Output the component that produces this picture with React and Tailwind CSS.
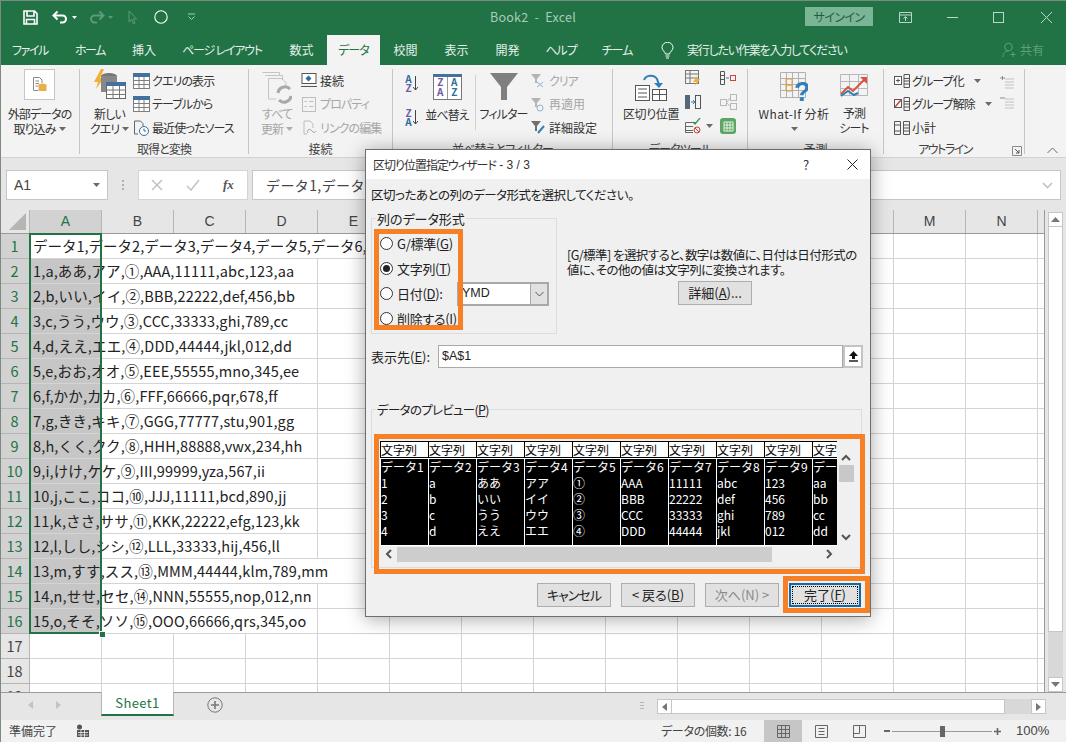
import React from 'react';

const UI = "font-['Noto_Sans_CJK_JP',sans-serif] [font-feature-settings:'palt']";

const TABS = [
  ['ファイル', 'w-[60px] tracking-[-1.4px]'],
  ['ホーム', 'w-[60px] tracking-[-1.4px]'],
  ['挿入', 'w-[48px]'],
  ['ページ レイアウト', 'w-[108px] tracking-[-1.2px] whitespace-pre'],
  ['数式', 'w-[51px]'],
  ['データ', 'w-[53px] bg-[#f3f3f3] text-[#217346] tracking-[-1px]'],
  ['校閲', 'w-[51px]'],
  ['表示', 'w-[51px]'],
  ['開発', 'w-[51px]'],
  ['ヘルプ', 'w-[56px] tracking-[-1px]'],
  ['チーム', 'w-[56px] tracking-[-1px]'],
];

const COLS = ['A', 'B', 'C', 'D', 'E', 'F', 'G', 'H', 'I', 'J', 'K', 'L', 'M', 'N'];

const ROWS = [
  'データ1,データ2,データ3,データ4,データ5,データ6,データ7,データ8,データ9,データ10',
  '1,a,ああ,アア,①,AAA,11111,abc,123,aa',
  '2,b,いい,イイ,②,BBB,22222,def,456,bb',
  '3,c,うう,ウウ,③,CCC,33333,ghi,789,cc',
  '4,d,ええ,エエ,④,DDD,44444,jkl,012,dd',
  '5,e,おお,オオ,⑤,EEE,55555,mno,345,ee',
  '6,f,かか,カカ,⑥,FFF,66666,pqr,678,ff',
  '7,g,きき,キキ,⑦,GGG,77777,stu,901,gg',
  '8,h,くく,クク,⑧,HHH,88888,vwx,234,hh',
  '9,i,けけ,ケケ,⑨,III,99999,yza,567,ii',
  '10,j,ここ,ココ,⑩,JJJ,11111,bcd,890,jj',
  '11,k,ささ,ササ,⑪,KKK,22222,efg,123,kk',
  '12,l,しし,シシ,⑫,LLL,33333,hij,456,ll',
  '13,m,すす,スス,⑬,MMM,44444,klm,789,mm',
  '14,n,せせ,セセ,⑭,NNN,55555,nop,012,nn',
  '15,o,そそ,ソソ,⑮,OOO,66666,qrs,345,oo',
];

const PREVIEW = [
  ['データ1', 'データ2', 'データ3', 'データ4', 'データ5', 'データ6', 'データ7', 'データ8', 'データ9', 'データ10'],
  ['1', 'a', 'ああ', 'アア', '①', 'AAA', '11111', 'abc', '123', 'aa'],
  ['2', 'b', 'いい', 'イイ', '②', 'BBB', '22222', 'def', '456', 'bb'],
  ['3', 'c', 'うう', 'ウウ', '③', 'CCC', '33333', 'ghi', '789', 'cc'],
  ['4', 'd', 'ええ', 'エエ', '④', 'DDD', '44444', 'jkl', '012', 'dd'],
];

// Small ribbon glyphs, all drawn on a 16px box
const Ico = ({ children, w = 16, h = 16, className = '' }) => (
  <svg width={w} height={h} viewBox={`0 0 ${w} ${h}`} fill="none" className={`shrink-0 ${className}`}>
    {children}
  </svg>
);

const TableIco = ({ head = '#41719c', line = '#7f7f7f' }) => (
  <Ico w={17} h={16}>
    <rect x="0.5" y="0.5" width="16" height="15" fill="#fff" stroke={line} />
    <rect x="0" y="0" width="17" height="4" fill={head} />
    <path d="M0 7.5H17M0 11.5H17M6 4V16M11 4V16" stroke={line} />
  </Ico>
);

const GroupIco = ({ mark }) => (
  <Ico>
    <rect x="0.5" y="3.5" width="7" height="8" fill="#fff" stroke="#555" />
    {mark}
    <path d="M10 1.5H15.5V14.5H10ZM10 5.5H15.5M10 8H15.5M10 11H15.5" stroke="#555" />
  </Ico>
);

const Caret = ({ className = '' }) => (
  <svg width="7" height="4" viewBox="0 0 7 4" className={`shrink-0 ${className}`}>
    <path d="M0 0H7L3.5 4Z" fill="#6a6a6a" />
  </svg>
);

const RibbonGroup = ({ width, label, labelClass = '', children }) => (
  <div className={`${width} h-[85px] border-r border-[#c6c6c6] flex flex-col shrink-0`}>
    <div className="h-[75px] flex shrink-0">{children}</div>
    <div className={`h-[10px] shrink-0 flex items-center justify-center text-[12px] leading-none text-[#444] tracking-[-0.9px] whitespace-nowrap ${labelClass}`}>{label}</div>
  </div>
);

const SmallBtn = ({ icon, children, grey, gap = 'gap-[2px]', kanji }) => (
  <div className={`h-[23.5px] flex items-center ${gap} text-[12px] whitespace-nowrap ${kanji ? '' : 'tracking-[-0.9px]'} ${grey ? 'text-[#a6a6a6]' : 'text-[#333]'}`}>
    {icon}
    <span>{children}</span>
  </div>
);

const BigLabel = ({ lines, grey, className = 'tracking-[-0.9px]' }) => (
  <div className={`text-[12px] leading-[15px] text-center whitespace-nowrap ${className} ${grey ? 'text-[#a6a6a6]' : 'text-[#333]'}`}>
    {lines.map((l, i) => (
      <div key={i} className="flex items-center justify-center gap-[3px]">{l}</div>
    ))}
  </div>
);

const Radio = ({ on, children, extra, labelClass = '' }) => (
  <div className="h-[25px] flex items-center gap-[4px] whitespace-nowrap text-[13px] tracking-[-0.3px]">
    <span className="w-[13px] h-[13px] rounded-full border border-[#333] bg-white flex items-center justify-center shrink-0">
      {on && <span className="w-[7px] h-[7px] rounded-full bg-[#222]" />}
    </span>
    <span className={labelClass}>{children}</span>
    {extra}
  </div>
);

const DlgBtn = ({ children, className = '' }) => (
  <div className={`h-[24px] border border-[#adadad] bg-[#e1e1e1] flex items-center justify-center text-[13px] whitespace-nowrap ${className}`}>
    {children}
  </div>
);

const Chevron = ({ dir }) => {
  const paths = {
    up: 'M1 6L5 2L9 6',
    down: 'M1 2L5 6L9 2',
    left: 'M6 1L2 5L6 9',
    right: 'M2 1L6 5L2 9',
  };
  const box = dir === 'up' || dir === 'down' ? '0 0 10 8' : '0 0 8 10';
  const size = dir === 'up' || dir === 'down' ? { width: 10, height: 8 } : { width: 8, height: 10 };
  return (
    <svg {...size} viewBox={box} fill="none" className="shrink-0">
      <path d={paths[dir]} stroke="#555" strokeWidth="2" />
    </svg>
  );
};

const TitleBar = () => (
  <div className="h-[33px] bg-[#217346] flex items-center shrink-0 border-t border-[#7c8a82] relative">
    <div className="flex items-center pl-[23px]">
      <Ico w={15} h={15}>
        <path d="M1 1H11.5L14 3.5V14H1Z M4 1.5V6H11V1.5 M3.5 14V9.5H11.5V14" stroke="#fff" strokeWidth="1.6" />
      </Ico>
      <Ico w={17} h={14} className="ml-[14px]">
        <path d="M1.5 5.5H10.5A3.5 3.5 0 0 1 10.5 12.5H8M5.5 1.5L1.5 5.5L5.5 9.5" stroke="#fff" strokeWidth="2" />
      </Ico>
      <svg width="5" height="3" viewBox="0 0 5 3" className="ml-[3px]"><path d="M0 0H5L2.5 3Z" fill="#fff" /></svg>
      <Ico w={17} h={14} className="ml-[11px]">
        <path d="M15.5 5.5H6.5A3.5 3.5 0 0 0 6.5 12.5H9M11.5 1.5L15.5 5.5L11.5 9.5" stroke="#5c9a78" strokeWidth="2" />
      </Ico>
      <svg width="5" height="3" viewBox="0 0 5 3" className="ml-[3px]"><path d="M0 0H5L2.5 3Z" fill="#5c9a78" /></svg>
      <Ico w={9} h={15} className="ml-[15px]">
        <path d="M1 1V12L3.5 9.5L5.5 14L7 13L5 9H8.5Z" stroke="#5c9a78" />
      </Ico>
      <Ico w={14} h={14} className="ml-[17px]">
        <circle cx="7" cy="7" r="6.2" stroke="#fff" strokeWidth="1.1" />
      </Ico>
      <Ico w={9} h={8} className="ml-[19px]">
        <path d="M1 1H8M1.5 3.5L4.5 6.5L7.5 3.5" stroke="#a9cbb8" />
      </Ico>
    </div>
    <div className="absolute left-[490px] top-[8px] text-[12.5px] leading-[16px] text-[#a9cbb8] whitespace-pre tracking-[0.25px]">Book2  -  Excel</div>
    <div className="ml-auto flex items-center">
      <div className="w-[68px] h-[19px] bg-[#7ab595] text-[#1f5f3c] text-[12px] tracking-[-0.6px] flex items-center justify-center mb-[1px]">サインイン</div>
      <div className="w-[74px] flex items-center">
        <Ico w={13} h={11} className="ml-[26px]">
          <path d="M0.5 0.5H12.5V10.5H0.5ZM0.5 3H12.5M6.5 9V5M4.5 6.5L6.5 4.5L8.5 6.5" stroke="#bcd6c8" />
        </Ico>
      </div>
      <div className="w-[46px] flex"><span className="w-[11px] h-[1px] bg-[#bcd6c8]" /></div>
      <div className="w-[47px] flex"><span className="w-[11px] h-[11px] border border-[#bcd6c8]" /></div>
      <Ico w={13} h={13} className="mr-[13px]"><path d="M1 1L12 12M12 1L1 12" stroke="#bcd6c8" /></Ico>
    </div>
  </div>
);

const TabBar = () => (
  <div className="h-[32px] bg-[#217346] flex items-end shrink-0 text-[12px] text-[#e6f0ea]">
    {TABS.map(([name, cls]) => (
      <div key={name} className={`h-[30px] flex items-center justify-center whitespace-nowrap ${cls}`}>{name}</div>
    ))}
    <div className="h-[30px] flex items-center ml-[16px] gap-[13px]">
      <Ico w={13} h={17}>
        <path d="M4.5 12C4 9.5 1 8.5 1 5.5A5.5 5.2 0 0 1 12 5.5C12 8.5 9 9.5 8.5 12ZM4.5 14H8.5M5 16H8" stroke="#fff" />
      </Ico>
      <span className="tracking-[-1.2px]">実行したい作業を入力してください</span>
    </div>
    <div className="h-[30px] flex items-center ml-auto mr-[22px] gap-[3px] text-[#5f9f7d]">
      <Ico w={15} h={16}>
        <circle cx="6.5" cy="5" r="3.8" stroke="#5f9f7d" />
        <path d="M1 15C1 11 3 9 6.5 9M11 10V15M8.5 12.5H13.5" stroke="#5f9f7d" />
      </Ico>
      <span>共有</span>
    </div>
  </div>
);

const Ribbon = () => (
  <div className="h-[93px] bg-[#f3f3f3] border-b border-[#d2d2d2] flex pt-[4px] shrink-0 relative">
    <RibbonGroup width="w-[80px]" label="">
      <div className="w-full flex flex-col items-center">
        <div className="w-[31px] h-[31px] bg-white border border-[#c6c6c6] flex items-center justify-center">
          <Ico w={14} h={15}>
            <path d="M0.5 0.5H6.5L9 3V6M0.5 0.5V13.5H5" stroke="#8a8a8a" fill="#fff" />
            <path d="M2.5 4H6M2.5 6.5H6M2.5 9H5" stroke="#8a8a8a" />
            <ellipse cx="9.5" cy="8" rx="4" ry="1.6" fill="#e8b04a" />
            <rect x="5.5" y="8" width="8" height="6" fill="#e8b04a" />
          </Ico>
        </div>
        <div className="mt-[6px]">
          <BigLabel lines={['外部データの', <React.Fragment key="a">取り込み <Caret /></React.Fragment>]} />
        </div>
      </div>
    </RibbonGroup>

    <RibbonGroup width="w-[169px]" label="取得と変換">
      <div className="w-[53px] flex flex-col items-center shrink-0 pl-[6px]">
        <Ico w={34} h={36}>
          <path d="M8 0L1 13H5L3 20L11 9H7L11 0Z" fill="#f2b035" />
          <ellipse cx="16" cy="7" rx="8" ry="3" fill="#777" />
          <rect x="8" y="7" width="16" height="16" fill="#888" />
          <rect x="13.5" y="13.5" width="19" height="16" fill="#fff" stroke="#666" />
          <rect x="13" y="13" width="20" height="4" fill="#41719c" />
          <path d="M13 21H33M13 25.5H33M20 17V30M26.5 17V30" stroke="#777" />
        </Ico>
        <div className="mt-[1px]">
          <BigLabel lines={['新しい', <React.Fragment key="a">クエリ <Caret /></React.Fragment>]} />
        </div>
      </div>
      <div className="flex flex-col">
        <SmallBtn icon={<TableIco head="#41719c" />}>クエリの表示</SmallBtn>
        <SmallBtn icon={<TableIco head="#41719c" />}>テーブルから</SmallBtn>
        <SmallBtn icon={
          <Ico w={17} h={16}>
            <path d="M1.5 1H7.5L10 3.5V6M1.5 1V14H5" stroke="#666" />
            <circle cx="11" cy="11" r="4.5" fill="#fff" stroke="#2f6f9f" />
            <path d="M11 8.5V11H13" stroke="#2f6f9f" />
          </Ico>
        }>最近使ったソース</SmallBtn>
      </div>
    </RibbonGroup>

    <RibbonGroup width="w-[144px]" label="接続" labelClass="tracking-normal">
      <div className="w-[52px] flex flex-col items-center shrink-0 pl-[4px] text-[#a6a6a6]">
        <Ico w={30} h={32} className="mt-[3px]">
          <path d="M0.5 0.5H17.5V4M3.5 3.5H20.5V8M6.5 6.5H20L24 11V16M6.5 6.5V27H14" stroke="#c4c4c4" />
          <path d="M16 21A7 7 0 0 1 28 17M29 24A7 7 0 0 1 17 28" stroke="#a8a8a8" strokeWidth="3" />
        </Ico>
        <div className="mt-[2px]">
          <BigLabel grey lines={['すべて', <React.Fragment key="a">更新 <Caret className="opacity-50" /></React.Fragment>]} />
        </div>
      </div>
      <div className="flex flex-col">
        <SmallBtn kanji gap="gap-[3px]" icon={
          <Ico w={16} h={15}>
            <rect x="1" y="0.5" width="14" height="10" fill="#fff" stroke="#555" />
            <path d="M7.5 2.5L10.5 5.5L7.5 8.5L4.5 5.5Z" fill="#2f6f9f" />
            <path d="M0 13.5H16" stroke="#555" />
          </Ico>
        }>接続</SmallBtn>
        <SmallBtn grey gap="gap-[3px]" icon={
          <Ico w={16} h={15}>
            <rect x="1.5" y="0.5" width="13" height="14" stroke="#bdbdbd" />
            <path d="M3.5 4.5H6M8 4.5H12.5M3.5 9.5H6M8 9.5H12.5" stroke="#bdbdbd" />
          </Ico>
        }>プロパティ</SmallBtn>
        <SmallBtn grey gap="gap-[3px]" icon={
          <Ico w={16} h={15}>
            <path d="M3 1H9L12 4V8M3 1V14H6" stroke="#bdbdbd" />
            <path d="M7 13A2 2 0 0 1 10 10L12 12A2 2 0 0 0 15 11" stroke="#a8a8a8" />
          </Ico>
        }>リンクの編集</SmallBtn>
      </div>
    </RibbonGroup>

    <RibbonGroup width="w-[220px]" label="並べ替えとフィルター">
      <div className="w-[32px] flex flex-col items-center pt-[5px] gap-[16px] shrink-0 pl-[6px]">
        <div className="flex items-center text-[10px] leading-[9px] font-bold text-[#6f5aa6]">
          <span className="flex flex-col text-center"><span className="text-[#2f6f9f]">A</span><span>Z</span></span>
          <Ico w={7} h={15}><path d="M3.5 0V14M1 11L3.5 14L6 11" stroke="#444" /></Ico>
        </div>
        <div className="flex items-center text-[10px] leading-[9px] font-bold text-[#6f5aa6]">
          <span className="flex flex-col text-center"><span>Z</span><span className="text-[#2f6f9f]">A</span></span>
          <Ico w={7} h={15}><path d="M3.5 0V14M1 11L3.5 14L6 11" stroke="#444" /></Ico>
        </div>
      </div>
      <div className="w-[44px] flex flex-col items-center shrink-0">
        <div className="w-[29px] h-[26px] mt-[5px] border border-[#777] bg-white border-t-[3px] border-t-[#41719c] grid grid-cols-2 text-[10px] leading-[10px] font-bold text-center text-[#6f5aa6]">
          <span>Z<br />A</span>
          <span className="border-l border-[#999] text-[#2f6f9f]">A<br />Z</span>
        </div>
        <div className="mt-[7px]"><BigLabel lines={['並べ替え']} /></div>
      </div>
      <div className="w-px h-[55px] bg-[#d0d0d0] mt-[6px] ml-[6px] shrink-0" />
      <div className="w-[55px] flex flex-col items-center shrink-0">
        <Ico w={28} h={28} className="mt-[4px]">
          <path d="M0 0H28L17 14V27H11V14Z" fill="#7f7f7f" />
        </Ico>
        <div className="mt-[5px]"><BigLabel lines={['フィルター']} /></div>
      </div>
      <div className="flex flex-col">
        <SmallBtn grey icon={<Ico w={16} h={15}><path d="M0 1H10L6 6V10H4V6Z" fill="#b5b5b5" /><path d="M6 9L12 14M12 9L6 14" stroke="#8fb2cc" /></Ico>}>クリア</SmallBtn>
        <SmallBtn grey kanji icon={<Ico w={16} h={15}><path d="M0 1H10L6 6V10H4V6Z" fill="#b5b5b5" /><circle cx="9" cy="11" r="3" stroke="#8fb2cc" /></Ico>}>再適用</SmallBtn>
        <SmallBtn kanji icon={<Ico w={16} h={15}><path d="M0 1H10L6 6V11H4V6Z" fill="#6f6f6f" /><path d="M7 13L13 6" stroke="#2f7fb8" strokeWidth="2" /></Ico>}>詳細設定</SmallBtn>
      </div>
    </RibbonGroup>

    <RibbonGroup width="w-[135px]" label="データツール">
      <div className="w-[67px] flex flex-col items-center shrink-0 pl-[9px]">
        <Ico w={32} h={28} className="mt-[5px]">
          <path d="M9 6A7 6 0 0 1 22 5L24 11" stroke="#2f7fb8" strokeWidth="2" />
          <path d="M19 9H28L24 14Z" fill="#2f7fb8" />
          <rect x="0.5" y="11.5" width="14" height="15" fill="#fff" stroke="#555" />
          <path d="M3 15H12M3 19H12M3 23H12" stroke="#555" />
          <rect x="17.5" y="15.5" width="14" height="11" fill="#fff" stroke="#555" />
          <path d="M17 20.5H32M24.5 15V27" stroke="#555" />
        </Ico>
        <div className="mt-[4px]"><BigLabel className="tracking-[-0.4px]" lines={['区切り位置']} /></div>
      </div>
      <div className="flex flex-col pl-[5px] pt-[1px] gap-[8px]">
        <Ico w={16} h={16}>
          <rect x="0.5" y="0.5" width="13" height="13" stroke="#777" />
          <path d="M1 4H13M1 8H13M5 1V13" stroke="#777" />
          <path d="M12 6L8 12H11L10 16L15 9H12Z" fill="#f2b035" />
        </Ico>
        <Ico w={16} h={16}>
          <rect x="0" y="1" width="5" height="14" fill="#56677a" />
          <rect x="10.5" y="1.5" width="5" height="13" stroke="#555" />
          <path d="M6 8H9.5M8 6L10 8L8 10" stroke="#2f7fb8" />
        </Ico>
        <div className="flex items-center gap-[5px]">
          <Ico w={16} h={16}>
            <path d="M0.5 4.5H12M0.5 8.5H8M0.5 12.5H8M0.5 4.5V14.5H8" stroke="#666" />
            <path d="M8 4L10 6L15 0" stroke="#3c9a5f" strokeWidth="1.4" />
            <circle cx="12" cy="12" r="3" stroke="#c8453b" />
            <path d="M10 10L14 14" stroke="#c8453b" />
          </Ico>
          <Caret />
        </div>
      </div>
      <div className="flex flex-col pl-[7px] pt-[1px] gap-[8px]">
        <Ico w={17} h={16}>
          <path d="M0.5 1.5H4.5V14.5H0.5ZM0.5 5.5H4.5M0.5 9.5H4.5" stroke="#555" />
          <path d="M6 8H9" stroke="#2f7fb8" />
          <rect x="10.5" y="5.5" width="5" height="5" stroke="#c8453b" />
        </Ico>
        <Ico w={17} h={16}>
          <rect x="0.5" y="5.5" width="6" height="6" stroke="#b8b8b8" />
          <rect x="10.5" y="0.5" width="6" height="6" stroke="#b8b8b8" />
          <rect x="10.5" y="9.5" width="6" height="6" stroke="#b8b8b8" />
          <path d="M7 8L10 4M7 9L10 12" stroke="#b8b8b8" />
        </Ico>
        <Ico w={16} h={16}>
          <rect x="0" y="0" width="16" height="16" rx="3" fill="#5fa565" />
          <path d="M4 4H13V13H4ZM4 7H13M4 10H13M7 4V13M10 4V13" stroke="#e7f3e8" />
        </Ico>
      </div>
    </RibbonGroup>

    <RibbonGroup width="w-[136px]" label="予測" labelClass="tracking-normal">
      <div className="w-[88px] flex flex-col items-center shrink-0 pl-[4px]">
        <Ico w={28} h={31} className="mt-[3px]">
          <path d="M0.5 0.5H25.5V25.5H0.5ZM0.5 6.5H25.5M0.5 12.5H25.5M0.5 18.5H25.5M6.5 0.5V25.5M12.5 0.5V25.5M18.5 0.5V25.5" stroke="#b0b0b0" />
          <path d="M6 7H12V13H6ZM6 13H12V19H6Z" stroke="#d9a24a" />
          <text x="14" y="29" fontSize="27" fontWeight="700" fill="#2f7fb8" fontFamily="Liberation Sans">?</text>
        </Ico>
        <div className="mt-[3px]"><BigLabel className="tracking-[0.4px]" lines={['What-If 分析', <Caret key="a" className="mt-[6px]" />]} /></div>
      </div>
      <div className="w-[36px] flex flex-col items-center shrink-0">
        <Ico w={28} h={28} className="mt-[5px]">
          <path d="M0.5 0.5H27.5V21.5H0.5ZM0.5 7.5H27.5M0.5 14.5H27.5M9.5 0.5V21.5M18.5 0.5V21.5" stroke="#b8b8b8" />
          <path d="M1 20L8 13L13 17L26 4" stroke="#d8543e" strokeWidth="2" />
          <path d="M1 22L8 17L14 21L18 19" stroke="#2f7fb8" strokeWidth="2" />
          <path d="M20 3H27V10Z" fill="#d8543e" />
        </Ico>
        <div className="mt-[3px]"><BigLabel lines={['予測', 'シート']} /></div>
      </div>
    </RibbonGroup>

    <RibbonGroup width="w-[141px]" label="アウトライン" labelClass="pr-[18px] tracking-[-1.5px]">
      <div className="flex flex-col pl-[10px]">
        <SmallBtn icon={<GroupIco mark={<path d="M2 7.5H6M4 5.5V9.5" stroke="#555" />} />}>
          <span className="inline-flex items-center gap-[10px]">グループ化<Caret /></span>
        </SmallBtn>
        <SmallBtn icon={<GroupIco mark={<path d="M1 11L7 4" stroke="#c8453b" strokeWidth="1.6" />} />}>
          <span className="inline-flex items-center gap-[10px]">グループ解除<Caret /></span>
        </SmallBtn>
        <SmallBtn kanji icon={
          <Ico>
            <path d="M0.5 1.5H6.5V14.5H0.5ZM9.5 1.5H15.5V14.5H9.5ZM9.5 5H15.5M9.5 8H15.5M9.5 11H15.5M0.5 5H6.5M0.5 11H6.5" stroke="#555" />
          </Ico>
        }>小計</SmallBtn>
      </div>
      <div className="flex flex-col pl-[8px] pt-[6px] gap-[6px]">
        <Ico w={14} h={14}><path d="M5 7H14M5 10H14M5 13H14M5 4H14" stroke="#c2c2c2" /><path d="M0 3H5M2.5 1V5" stroke="#8a8a8a" /></Ico>
        <Ico w={14} h={14}><path d="M5 7H14M5 10H14M5 13H14M5 4H14" stroke="#c2c2c2" /><path d="M0 3H5" stroke="#8a8a8a" /></Ico>
      </div>
    </RibbonGroup>

    <div className="absolute left-[1012px] top-[81px]">
      <Ico w={10} h={10}><path d="M0.5 0.5H9.5V9.5H0.5Z" stroke="#8a8a8a" /><path d="M3 3L7 7M7 4V7H4" stroke="#555" /></Ico>
    </div>
    <div className="absolute left-[1047px] top-[82px]">
      <Ico w={11} h={7}><path d="M0.5 6L5.5 1L10.5 6" stroke="#666" /></Ico>
    </div>
  </div>
);

const FormulaBar = () => (
  <div className="h-[52px] bg-[#e6e6e6] flex items-start pt-[12px] pl-[6px] pr-[5px] shrink-0 text-[14px]">
    <div className="w-[102px] h-[30px] bg-white border border-[#c6c6c6] flex items-center justify-between pl-[7px] pr-[7px] font-['Liberation_Sans',sans-serif] text-[#444]">
      <span>A1</span>
      <Caret />
    </div>
    <div className="w-[30px] h-[30px] flex flex-col items-center justify-center gap-[2px]">
      <span className="w-[2px] h-[2px] bg-[#b0b0b0]" />
      <span className="w-[2px] h-[2px] bg-[#b0b0b0]" />
      <span className="w-[2px] h-[2px] bg-[#b0b0b0]" />
    </div>
    <div className="w-[110px] h-[30px] bg-white border border-[#d4d4d4] flex items-center pl-[12px] gap-[23px]">
      <Ico w={12} h={12}><path d="M1 1L11 11M11 1L1 11" stroke="#c2c2c2" strokeWidth="1.5" /></Ico>
      <Ico w={14} h={12}><path d="M1 7L5 11L13 1" stroke="#c2c2c2" strokeWidth="1.5" /></Ico>
      <span className="font-['Liberation_Serif',serif] italic text-[13px] text-[#555] font-bold">fx</span>
    </div>
    <div className="flex-1 h-[30px] ml-[4px] bg-white border border-[#c6c6c6] flex items-center pl-[13px] pr-[7px] justify-between text-[#444] tracking-[0.4px] whitespace-nowrap [font-feature-settings:normal]">
      <span>データ1,データ2,データ3,データ4,データ5,データ6</span>
      <Ico w={11} h={7}><path d="M1 1L5.5 5.5L10 1" stroke="#c2c2c2" strokeWidth="1.6" /></Ico>
    </div>
  </div>
);

const SheetRow = ({ num, text }) => {
  const span = num === 1 ? 'col-span-6' : num === 14 ? 'col-span-5' : text ? 'col-span-4' : '';
  const used = num === 1 ? 6 : num === 14 ? 5 : text ? 4 : 1;
  return (
    <div className="grid grid-cols-[30px_repeat(14,72px)_7px] h-[25px] shrink-0">
      <div className={`border-b border-r border-[#b5b5b5] flex items-center justify-center text-[14.5px] ${text ? 'bg-[#d2d2d2] text-[#217346]' : 'bg-[#e6e6e6] text-[#444]'}`}>{num}</div>
      <div className={`${span} relative border-b border-r border-[#d4d4d4] flex items-center pl-[3px] whitespace-nowrap text-[14.5px] text-[#222] overflow-hidden`}>
        {text && num > 1 && <div className="absolute left-0 top-0 bottom-0 w-[70px] bg-[#c6c6c6]" />}
        <span className={`relative ${num > 1 ? 'tracking-[0.15px]' : ''}`}>{text}</span>
      </div>
      {Array.from({ length: 15 - used }, (_, i) => (
        <div key={i} className="border-b border-r border-[#d4d4d4]" />
      ))}
    </div>
  );
};

const Sheet = () => (
  <div className="flex flex-1 min-h-0 bg-[#e6e6e6] [font-feature-settings:normal]">
    <div className="w-[1045px] relative flex flex-col overflow-hidden bg-white border-r border-[#9a9a9a] shrink-0">
      <div className="grid grid-cols-[30px_repeat(14,72px)_7px] h-[24px] shrink-0 bg-[#e6e6e6] border-b border-[#9a9a9a]">
        <div className="border-r border-[#b5b5b5] flex items-end justify-end pr-[3px] pb-[3px]">
          <svg width="17" height="17" viewBox="0 0 17 17"><path d="M17 0V17H0Z" fill="#b5b5b5" /></svg>
        </div>
        {COLS.map((c, i) => (
          <div key={c} className={`border-r border-[#b5b5b5] flex items-center justify-center text-[14px] font-['Liberation_Sans',sans-serif] ${i === 0 ? 'bg-[#d2d2d2] text-[#217346]' : 'text-[#444]'}`}>{c}</div>
        ))}
        <div />
      </div>
      {ROWS.map((t, i) => <SheetRow key={i} num={i + 1} text={t} />)}
      <SheetRow num={17} />
      <SheetRow num={18} />
      <SheetRow num={19} />
      {/* selection frame over column A */}
      <div className="absolute left-[29px] top-[23px] w-[73px] h-[401px] border-2 border-[#217346] pointer-events-none" />
      <div className="absolute left-[99px] top-[421px] w-[5px] h-[5px] bg-[#217346] border border-white box-content" />
    </div>
    {/* vertical scrollbar */}
    <div className="w-[21px] pl-[3px] pr-[3px] pt-[2px] flex flex-col shrink-0">
      <div className="h-[15px] bg-white border border-[#c6c6c6] flex items-center justify-center">
        <svg width="9" height="5" viewBox="0 0 9 5"><path d="M4.5 0L9 5H0Z" fill="#777" /></svg>
      </div>
      <div className="h-[405px] bg-white border-x border-b border-[#c6c6c6]" />
      <div className="flex-1 bg-[#d8d8d8]" />
      <div className="h-[15px] bg-white border border-[#c6c6c6] flex items-center justify-center">
        <svg width="9" height="5" viewBox="0 0 9 5"><path d="M0 0H9L4.5 5Z" fill="#777" /></svg>
      </div>
    </div>
  </div>
);

const SheetTabs = () => (
  <div className="h-[28px] bg-[#e6e6e6] border-t border-[#9a9a9a] flex items-start shrink-0 relative">
    <div className="w-[101px] h-[24px] flex items-center pl-[28px] gap-[23px]">
      <svg width="5" height="8" viewBox="0 0 5 8"><path d="M5 0V8L0 4Z" fill="#c2c2c2" /></svg>
      <svg width="5" height="8" viewBox="0 0 5 8"><path d="M0 0V8L5 4Z" fill="#c2c2c2" /></svg>
    </div>
    <div className="w-[73px] h-[24px] -mt-px bg-white border-x border-b-2 border-x-[#b5b5b5] border-b-[#217346] text-[#217346] text-[13px] flex items-center justify-center tracking-[0.4px]">Sheet1</div>
    <div className="ml-[33px] mt-[4px]">
      <Ico><circle cx="8" cy="8" r="7.2" stroke="#777" /><path d="M4 8H12M8 4V12" stroke="#777" strokeWidth="1.6" /></Ico>
    </div>
    <div className="absolute left-[640px] top-[9px] flex flex-col gap-[2px]">
      <span className="w-[4px] h-[1px] bg-[#b5b5b5]" />
      <span className="w-[4px] h-[1px] bg-[#b5b5b5]" />
      <span className="w-[4px] h-[1px] bg-[#b5b5b5]" />
    </div>
    <div className="absolute left-[657px] top-[6px] w-[389px] h-[15px] flex bg-[#d8d8d8]">
      <div className="w-[15px] bg-white border border-[#c6c6c6] flex items-center justify-center">
        <svg width="5" height="8" viewBox="0 0 5 8"><path d="M5 0V8L0 4Z" fill="#777" /></svg>
      </div>
      <div className="w-[333px] bg-white border-y border-r border-[#c6c6c6]" />
      <div className="flex-1" />
      <div className="w-[15px] bg-white border border-[#c6c6c6] flex items-center justify-center">
        <svg width="5" height="8" viewBox="0 0 5 8"><path d="M0 0V8L5 4Z" fill="#777" /></svg>
      </div>
    </div>
  </div>
);

const StatusBar = () => (
  <div className="h-[22px] bg-[#f1f1f1] flex items-center shrink-0 text-[12px] text-[#444]">
    <span className="ml-[9px] [font-feature-settings:normal]">準備完了</span>
    <Ico w={14} h={14} className="ml-[19px]">
      <circle cx="3.5" cy="3" r="2.5" fill="#555" />
      <path d="M1 6H13V13H1Z" fill="#555" />
      <path d="M2 8.5H12M2 11H12M5 6V13M8.5 6V13" stroke="#f1f1f1" strokeWidth="0.8" />
    </Ico>
    <span className="ml-[571px] w-[85px] whitespace-nowrap tracking-[-0.3px]">データの個数: 16</span>
    <div className="ml-[18px] w-[38px] h-[22px] bg-[#c6c6c6] flex items-center justify-center">
      <Ico w={13} h={13}><path d="M0.5 0.5H12.5V12.5H0.5ZM0.5 4.5H12.5M0.5 8.5H12.5M4.5 0.5V12.5M8.5 0.5V12.5" stroke="#666" /></Ico>
    </div>
    <div className="w-[38px] flex justify-center">
      <Ico w={13} h={13}><path d="M0.5 0.5H12.5V12.5H0.5ZM3.5 3.5H9.5M3.5 6.5H9.5M3.5 9.5H9.5" stroke="#666" /></Ico>
    </div>
    <div className="w-[38px] flex justify-center">
      <Ico w={13} h={13}><path d="M0.5 0.5H12.5V12.5H0.5ZM0.5 8.5H6.5V0.5" stroke="#666" /></Ico>
    </div>
    <span className="w-[6px] h-[2px] bg-[#666] ml-[6px]" />
    <div className="w-[100px] h-[1px] bg-[#9a9a9a] ml-[2px] relative">
      <span className="absolute left-[48px] -top-[5px] w-[5px] h-[11px] bg-[#666]" />
    </div>
    <Ico w={7} h={7} className="ml-[2px]"><path d="M0 3.5H7M3.5 0V7" stroke="#666" strokeWidth="1.6" /></Ico>
    <span className="ml-[15px] text-[13px] font-['Liberation_Sans',sans-serif]">100%</span>
  </div>
);

const Dialog = () => (
  <div className="absolute left-[365px] top-[149px] w-[506px] h-[468px] bg-[#f0f0f0] border border-[#6e6e6e] shadow-[0_2px_18px_rgba(0,0,0,0.35)] flex flex-col text-[12.5px] text-[#222]">
    <div className="h-[29px] bg-white flex items-center pl-[7px] shrink-0 text-[12px] text-[#333] relative">
      <span className="tracking-[-1px] whitespace-nowrap">区切り位置指定ウィザード</span>
      <span className="whitespace-pre [font-feature-settings:normal] font-['Liberation_Sans',sans-serif]"> - 3 / 3</span>
      <span className="absolute left-[437px] top-[5px] text-[13px]">?</span>
      <Ico w={11} h={11} className="absolute left-[481px] top-[9px]"><path d="M0.5 0.5L10.5 10.5M10.5 0.5L0.5 10.5" stroke="#222" /></Ico>
    </div>
    <div className="flex flex-col pl-[5px] flex-1">
      <div className="h-[32px] flex items-center whitespace-nowrap tracking-[-0.5px]">区切ったあとの列のデータ形式を選択してください。</div>

      <div className="flex mt-[7px] h-[116px]">
        <div className="w-[186px] border border-[#dcdcdc] relative pl-[8px] pt-[12px] shrink-0">
          <span className="absolute left-[4px] -top-[10px] px-[1px] bg-[#f0f0f0] text-[13px] whitespace-nowrap">列のデータ形式</span>
          <Radio><>G/標準(<u>G</u>)</></Radio>
          <Radio on><>文字列(<u>T</u>)</></Radio>
          <Radio labelClass="w-[55px]" extra={
            <div className="w-[92px] h-[24px] bg-white border-2 border-[#a9a9a9] flex items-center justify-between ml-[1px] pl-[3px] shrink-0">
              <span className="font-['Liberation_Sans',sans-serif] text-[12.5px] tracking-normal">YMD</span>
              <div className="w-[17px] h-full bg-[#e1e1e1] border-l border-[#a9a9a9] flex items-center justify-center">
                <Ico w={9} h={6}><path d="M0.5 1L4.5 5L8.5 1" stroke="#555" /></Ico>
              </div>
            </div>
          }><>日付(<u>D</u>):</></Radio>
          <Radio><>削除する(<u>I</u>)</></Radio>
        </div>
        <div className="ml-[10px] pt-[29px] flex flex-col w-[295px]">
          <div className="leading-[15px] whitespace-nowrap tracking-[-0.55px]">[G/標準] を選択すると、数字は数値に、日付は日付形式の</div>
          <div className="leading-[15px] whitespace-nowrap tracking-[-0.55px]">値に、その他の値は文字列に変換されます。</div>
          <DlgBtn className="w-[74px] ml-[111px] mt-[4px]"><>詳細(<u>A</u>)...</></DlgBtn>
        </div>
      </div>

      <div className="flex items-center mt-[11px] h-[23px]">
        <span className="w-[67px] whitespace-nowrap text-[13px]">表示先(<u>E</u>):</span>
        <div className="w-[405px] h-full bg-white border border-[#a9a9a9] flex items-center pl-[3px] font-['Liberation_Sans',sans-serif] text-[12.5px]">$A$1</div>
        <div className="w-[20px] h-full bg-white border-2 border-[#c4c4c4] flex items-center justify-center">
          <Ico w={9} h={11}><path d="M4.5 0L9 5H6V8H3V5H0Z" fill="#111" /><path d="M0 10H9" stroke="#111" strokeWidth="1.4" /></Ico>
        </div>
      </div>

      <div className="mt-[41px] w-[491px] h-[159px] border border-[#dcdcdc] relative pl-[8px] pt-[31px] shrink-0">
        <span className="absolute left-[4px] -top-[9px] px-[1px] bg-[#f0f0f0] tracking-[-0.7px] whitespace-nowrap">データのプレビュー(<u>P</u>)</span>
        <div className="flex">
          <div className="w-[457px] h-[105px] overflow-hidden bg-black border-t border-black border-b border-b-white text-[12px] leading-[16px] [font-feature-settings:normal]">
            <div className="grid grid-cols-[repeat(9,48px)_25px] h-[16px] bg-white text-black border-b border-black leading-[15px]">
              {PREVIEW[0].map((_, i) => (
                <div key={i} className="border-l border-black overflow-hidden whitespace-nowrap">文字列</div>
              ))}
            </div>
            <div className="h-[1px] bg-white" />
            {PREVIEW.map((row, r) => (
              <div key={r} className="grid grid-cols-[repeat(9,48px)_25px] h-[16px] text-white">
                {row.map((c, i) => (
                  <div key={i} className="border-l border-white overflow-hidden whitespace-nowrap">{c}</div>
                ))}
              </div>
            ))}
            <div className="grid grid-cols-[repeat(9,48px)_25px] h-[9px]">
              {PREVIEW[0].map((_, i) => <div key={i} className="border-l border-white" />)}
            </div>
          </div>
          <div className="w-[21px] h-[105px] flex flex-col items-center">
            <div className="h-[24px] flex items-end pb-[3px] pr-[3px]"><Chevron dir="up" /></div>
            <div className="w-[15px] h-[17px] bg-[#c8c8c8] mr-[3px]" />
            <div className="flex-1 flex items-end pb-[5px] pr-[3px]"><Chevron dir="down" /></div>
          </div>
        </div>
        <div className="w-[457px] h-[16px] flex items-center">
          <div className="w-[17px] flex justify-center"><Chevron dir="left" /></div>
          <div className="w-[375px] h-[15px] bg-[#cdcdcd]" />
          <div className="flex-1 flex justify-end pr-[4px]"><Chevron dir="right" /></div>
        </div>
      </div>

      <div className="flex mt-[15px] pl-[166px] gap-[10px]">
        <DlgBtn className="w-[74px] tracking-[-1px]">キャンセル</DlgBtn>
        <DlgBtn className="w-[74px]"><>&lt; 戻る(<u>B</u>)</></DlgBtn>
        <DlgBtn className="w-[74px] text-[#8a8a8a]">次へ(N) &gt;</DlgBtn>
        <div className="w-[72px] h-[24px] border-2 border-[#0f6aa8] bg-[#e1e1e1] flex p-[1px] text-[13px]">
          <div className="flex-1 border border-dotted border-black flex items-center justify-center"><>完了(<u>F</u>)</></div>
        </div>
      </div>
    </div>

    {/* orange callouts drawn on top of the wizard */}
    <div className="absolute left-[8px] top-[79px] w-[89px] h-[101px] border-[5px] border-[#f58025] pointer-events-none" />
    <div className="absolute left-[8px] top-[284px] w-[491px] h-[140px] border-[5px] border-[#f58025] pointer-events-none" />
    <div className="absolute left-[417px] top-[426px] w-[87px] h-[37px] border-[5px] border-[#f58025] pointer-events-none" />
  </div>
);

export default function App() {
  return (
    <div className={`w-[1066px] h-[742px] relative overflow-hidden flex flex-col ${UI}`}>
      <TitleBar />
      <TabBar />
      <Ribbon />
      <FormulaBar />
      <Sheet />
      <SheetTabs />
      <StatusBar />
      <Dialog />
      {/* thin window edge */}
      <div className="absolute left-0 top-0 bottom-0 w-px bg-[#7c8a82]" />
    </div>
  );
}
